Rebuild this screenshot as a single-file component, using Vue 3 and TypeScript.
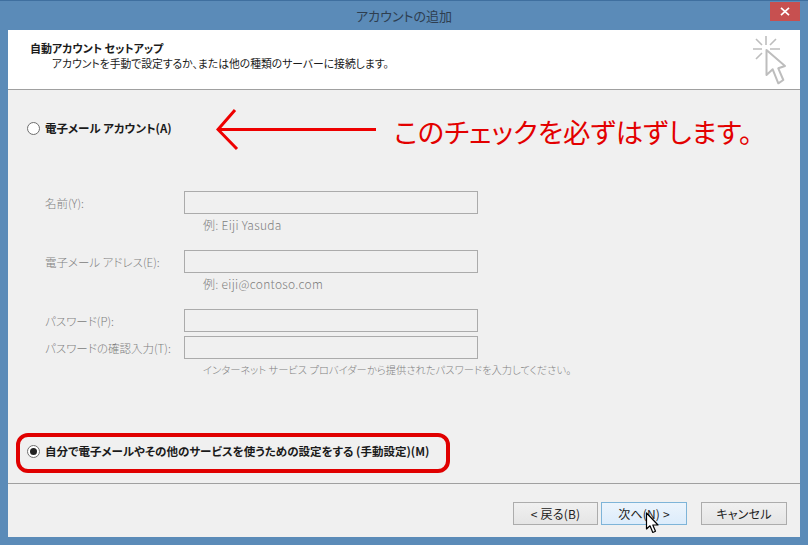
<script setup lang="ts">
interface Field { label: string; hint?: string; latin?: boolean }
const fields: Field[] = [
  { label: '名前(Y):', hint: '例: Eiji Yasuda', latin: true },
  { label: '電子メール アドレス(E):', hint: '例: eiji@contoso.com', latin: true },
  { label: 'パスワード(P):' },
  { label: 'パスワードの確認入力(T):', hint: 'インターネット サービス プロバイダーから提供されたパスワードを入力してください。' },
]
</script>

<template>
  <div class="window">
    <div class="titlebar">
      <span class="title">アカウントの追加</span>
      <span class="close">
        <svg width="10" height="9" viewBox="0 0 10 9"><path d="M1 .8 9 8.2M9 .8 1 8.2" stroke="#fff" stroke-width="1.7" fill="none" /></svg>
      </span>
    </div>
    <div class="client">
      <header class="head">
        <div class="head-text">
          <div class="head-title">自動アカウント セットアップ</div>
          <div class="head-sub">アカウントを手動で設定するか、または他の種類のサーバーに接続します。</div>
        </div>
        <svg class="wizard" width="36" height="52" viewBox="0 0 36 52" fill="none">
          <path d="M16 1v9M3 14h9M20 14h10M6 4l6 6M26 4l-6 6M6 24l6-6" stroke="#bdbdbd" stroke-width="1.6" />
          <path d="M16.500 15V40L22.700 34.300 28.300 48.300 33.300 45 28.300 33.300 35 31Z" fill="#fff" stroke="#bdbdbd" stroke-width="2" stroke-linejoin="round" />
        </svg>
      </header>
      <main class="body">
        <label class="radio-row first">
          <span class="radio"></span>
          <span class="radio-text">電子メール アカウント(A)</span>
        </label>
        <div class="fields">
          <div v-for="f in fields" :key="f.label" class="field" :class="{ nohint: !f.hint }">
            <span class="field-label">{{ f.label }}</span>
            <span class="input"></span>
            <span v-if="f.hint" class="hint" :class="{ latin: f.latin }">{{ f.hint }}</span>
          </div>
        </div>
        <label class="radio-row second">
          <span class="radio on"></span>
          <span class="radio-text">自分で電子メールやその他のサービスを使うための設定をする (手動設定)(M)</span>
        </label>

        <svg class="arrow" width="166" height="44" viewBox="0 0 166 44" fill="none">
          <path d="M2 21.500H160M19 2 2 21.500 21 41" stroke="#ee0000" stroke-width="3" />
        </svg>
        <div class="note">このチェックを必ずはずします。</div>
        <div class="ring"></div>
      </main>
      <footer class="foot">
        <button class="btn">&lt; 戻る(B)</button>
        <button class="btn default">次へ(N) &gt;</button>
        <button class="btn cancel">キャンセル</button>
        <svg class="pointer" width="14" height="22" viewBox="0 0 14 22">
          <path d="M1.500 1V17L5 13.800 7.800 20.500 10.500 19.300 7.800 13H13Z" fill="#fff" stroke="#000" stroke-width="1.200" stroke-linejoin="round" />
        </svg>
      </footer>
    </div>
  </div>
</template>

<style scoped>
.window {
  width: 808px;
  height: 545px;
  box-sizing: border-box;
  background: #5b8bb8;
  border-top: 1px solid #3f6f9f;
  padding: 0 8px 8px;
  display: flex;
  flex-direction: column;
  font-family: "Noto Sans CJK JP", "Noto Sans", sans-serif;
  font-feature-settings: "palt";
  color: #1a1a1a;
  overflow: hidden;
}
.titlebar {
  height: 29px;
  flex: none;
  display: flex;
  align-items: center;
  justify-content: center;
  position: relative;
}
.title {
  font-size: 13px;
  color: #2e3e50;
}
.close {
  position: absolute;
  right: 0;
  top: 1px;
  width: 30px;
  height: 19px;
  background: #c75050;
  display: flex;
  align-items: center;
  justify-content: center;
}
.client {
  flex: 1;
  display: flex;
  flex-direction: column;
  background: #f0f0f0;
}
.head {
  height: 60px;
  flex: none;
  box-sizing: border-box;
  background: #fff;
  border-bottom: 1px solid #a0a0a0;
  display: flex;
  justify-content: space-between;
  padding: 10px 14px 0 22px;
}
.head-title {
  font-size: 11px;
  line-height: 16px;
  font-weight: 700;
}
.head-sub {
  font-size: 10.800px;
  line-height: 15px;
  padding-left: 22px;
}
.wizard {
  margin-top: -5px;
}
.body {
  flex: 1;
  position: relative;
  display: flex;
  flex-direction: column;
  padding-left: 19px;
  border-bottom: 1px solid #a0a0a0;
}
.radio-row {
  display: flex;
  align-items: center;
  gap: 5px;
  height: 16px;
}
.radio-row.first {
  margin-top: 30px;
}
.radio-row.second {
  margin-top: 66px;
}
.radio {
  width: 13px;
  height: 13px;
  box-sizing: border-box;
  border-radius: 50%;
  border: 1px solid #6f6f6f;
  background: #fff;
  display: flex;
  align-items: center;
  justify-content: center;
  flex: none;
}
.radio.on::after {
  content: "";
  width: 7px;
  height: 7px;
  border-radius: 50%;
  background: #222;
}
.radio-text {
  font-size: 11.500px;
  font-weight: 700;
  white-space: nowrap;
}
.fields {
  margin-top: 55px;
  display: flex;
  flex-direction: column;
}
.field {
  display: grid;
  grid-template-columns: 139px 294px;
  grid-template-rows: 23px 36px;
  padding-left: 18px;
}
.field.nohint {
  grid-template-rows: 23px 4px;
}
.field:last-child {
  grid-template-rows: 23px 18px;
}
.field-label {
  font-size: 11.500px;
  font-weight: 300;
  color: #808080;
  align-self: center;
  white-space: nowrap;
}
.input {
  border: 1px solid #ababab;
  background: #f0f0f0;
  box-sizing: border-box;
}
.hint {
  grid-column: 2;
  padding: 2px 0 0 19px;
  font-size: 10.300px;
  font-weight: 300;
  line-height: 18px;
  color: #808080;
  white-space: nowrap;
}
.hint.latin {
  font-size: 12px;
  letter-spacing: 0.300px;
}
.arrow {
  position: absolute;
  left: 208px;
  top: 18px;
}
.note {
  position: absolute;
  left: 386px;
  top: 21px;
  font-size: 27.400px;
  line-height: 40px;
  color: #e30000;
  white-space: nowrap;
}
.ring {
  position: absolute;
  left: 8px;
  top: 343px;
  width: 434px;
  height: 40px;
  box-sizing: border-box;
  border: 4px solid #e00000;
  border-radius: 12px;
}
.foot {
  height: 53px;
  box-sizing: border-box;
  flex: none;
  position: relative;
  display: flex;
  justify-content: flex-end;
  align-items: flex-start;
  padding: 18px 13px 0 0;
  gap: 3px;
}
.btn {
  width: 85px;
  height: 23px;
  padding: 0;
  border: 1px solid #acacac;
  background: linear-gradient(#f0f0f0, #e5e5e5);
  font: inherit;
  font-feature-settings: "palt";
  font-size: 12px;
  letter-spacing: 0.200px;
  color: #222;
}
.btn.default {
  width: 86px;
  border-color: #7eb4d8;
  background: linear-gradient(#ecf4fc, #dcecfb);
}
.btn.cancel {
  width: 86px;
  margin-left: 11px;
}
.pointer {
  position: absolute;
  left: 637px;
  top: 28px;
}
</style>
<style>
html, body { margin: 0; background: #5b8bb8; }
</style>
